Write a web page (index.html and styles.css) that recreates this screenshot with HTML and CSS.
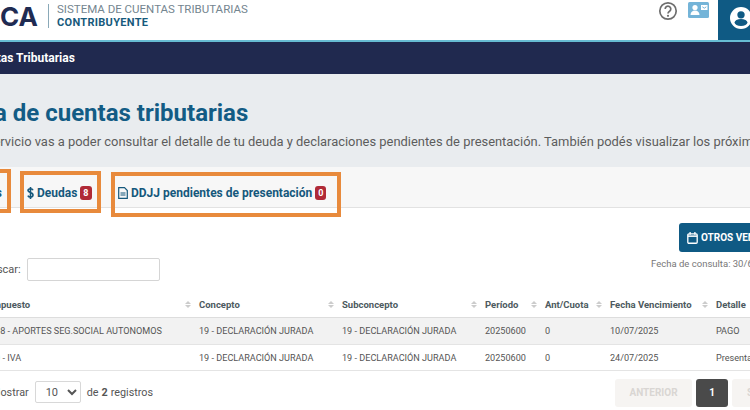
FILE: index.html
```html
<!DOCTYPE html>
<html lang="es">
<head>
<meta charset="utf-8">
<title>Sistema de Cuentas Tributarias</title>
<link rel="stylesheet" href="styles.css">
</head>
<body>
<div class="page">
  <header class="top">
    <span class="logo">ARCA</span>
    <span class="divider"></span>
    <div class="system">
      <div class="system-name">SISTEMA DE CUENTAS TRIBUTARIAS</div>
      <div class="system-role">CONTRIBUYENTE</div>
    </div>
    <div class="top-icons">
      <svg class="ico-help" width="20" height="20" viewBox="0 0 20 20"><circle cx="10" cy="10" r="8.2" fill="none" stroke="#6e6e6e" stroke-width="1.7"/><path d="M7.2 7.9a2.8 2.8 0 1 1 4.4 2.3c-1 .7-1.6 1.1-1.6 2.3" fill="none" stroke="#6e6e6e" stroke-width="1.7"/><circle cx="10" cy="14.8" r="1.1" fill="#6e6e6e"/></svg>
      <svg class="ico-card" width="21" height="16" viewBox="0 0 21 16"><rect width="21" height="16" rx="1.5" fill="#74b4d8"/><circle cx="7" cy="5.500" r="2.600" fill="#fff"/><path d="M2.500 13c0-3 2-4.500 4.500-4.500s4.500 1.500 4.500 4.500z" fill="#fff"/><rect x="13" y="3" width="6.500" height="5" fill="#fff"/><path d="M14.300 4.800l2 1.400 2-1.400" fill="none" stroke="#74b4d8" stroke-width="1"/></svg>
    </div>
    <div class="user-tile">
      <svg width="22" height="22" viewBox="0 0 24 24"><circle cx="12" cy="12" r="12" fill="#fff"/><circle cx="12" cy="8.500" r="4" fill="#0f5a84"/><ellipse cx="12" cy="17" rx="7" ry="3.800" fill="#0f5a84"/></svg>
    </div>
  </header>
  <nav class="nav">Cuentas Tributarias</nav>
  <section class="hero">
    <h1 class="title">Consulta de cuentas tributarias</h1>
    <p class="lead">Con este servicio vas a poder consultar el detalle de tu deuda y declaraciones pendientes de presentación. También podés visualizar los próximos vencimientos.</p>
  </section>
  <div class="tabs">
    <a class="tab tab-first">Vencimientos</a>
    <a class="tab tab-debt"><svg class="tab-ico" width="7" height="12" viewBox="0 0 7 12"><path d="M6 3.200C5.600 2.200 4.700 1.800 3.500 1.800 2 1.800 1 2.500 1 3.600c0 2.600 5 1.300 5 4.500 0 1.200-1.100 2-2.500 2-1.300 0-2.200-.5-2.600-1.500M3.500 0v12" fill="none" stroke="#15587c" stroke-width="1.600"/></svg>Deudas<span class="badge">8</span></a>
    <a class="tab tab-ddjj"><svg class="tab-ico" width="10" height="12" viewBox="0 0 10 12"><path d="M.7.700h5.800l2.800 2.800v7.800H.7z" fill="none" stroke="#15587c" stroke-width="1.200"/><path d="M2.500 6h5M2.500 8h5" stroke="#15587c" stroke-width="1.200"/></svg>DDJJ pendientes de presentación<span class="badge">0</span></a>
    <span class="mark mark-a"></span>
    <span class="mark mark-b"></span>
    <span class="mark mark-c"></span>
  </div>
  <main class="content">
    <div class="actions">
      <button class="btn-other"><svg width="11" height="12" viewBox="0 0 10 11"><rect x=".7" y="1.700" width="8.600" height="8.600" rx="1" fill="none" stroke="#fff" stroke-width="1.200"/><path d="M.7 3.800h8.600" stroke="#fff" stroke-width="1.400"/><path d="M2.800 0v2.500M7.200 0v2.500" stroke="#fff" stroke-width="1.200"/></svg>OTROS VENCIMIENTOS</button>
    </div>
    <div class="filters">
      <label class="search">Buscar:<input class="search-input" type="text"></label>
      <span class="consult">Fecha de consulta: 30/6/2025 12:00:00</span>
    </div>
    <table class="grid">
      <colgroup>
        <col class="c1"><col class="c2"><col class="c3"><col class="c4"><col class="c5"><col class="c6"><col class="c7">
      </colgroup>
      <thead>
        <tr>
          <th><div class="th-in">Impuesto<span class="sort"></span></div></th>
          <th><div class="th-in">Concepto<span class="sort"></span></div></th>
          <th><div class="th-in">Subconcepto<span class="sort"></span></div></th>
          <th><div class="th-in">Período<span class="sort"></span></div></th>
          <th><div class="th-in">Ant/Cuota<span class="sort"></span></div></th>
          <th><div class="th-in">Fecha Vencimiento<span class="sort"></span></div></th>
          <th><div class="th-in">Detalle<span class="sort"></span></div></th>
        </tr>
      </thead>
      <tbody>
        <tr class="odd">
          <td>308 - APORTES SEG.SOCIAL AUTONOMOS</td>
          <td>19 - DECLARACIÓN JURADA</td>
          <td>19 - DECLARACIÓN JURADA</td>
          <td>20250600</td>
          <td>0</td>
          <td>10/07/2025</td>
          <td>PAGO</td>
        </tr>
        <tr>
          <td>30 - IVA</td>
          <td>19 - DECLARACIÓN JURADA</td>
          <td>19 - DECLARACIÓN JURADA</td>
          <td>20250600</td>
          <td>0</td>
          <td>24/07/2025</td>
          <td>Presentación</td>
        </tr>
      </tbody>
    </table>
    <div class="pager">
      <div class="pager-info">Mostrar
        <select class="pager-size"><option>10</option></select>
        de <b>2</b> registros
      </div>
      <div class="pager-btns">
        <span class="pg pg-off pg-prev">ANTERIOR</span>
        <span class="pg pg-on">1</span>
        <span class="pg pg-off pg-next">SIGUIENTE</span>
      </div>
    </div>
  </main>
</div>
</body>
</html>
```
FILE: styles.css
```css
html, body { margin: 0; padding: 0; height: 100%; overflow: hidden; background: #fff; }
body { font-family: Roboto, "Liberation Sans", sans-serif; }
.page { width: 930px; margin-left: -100px; }

.top { height: 40px; display: flex; align-items: flex-start; border-bottom: 2px solid #67bcd3; background: #fff; box-sizing: content-box; }
.logo { margin-left: 50px; margin-top: 1px; width: 88px; text-align: right; font: 700 26px/32px Inter, "Liberation Sans", sans-serif; color: #1f2b52; }
.divider { width: 1px; height: 24px; margin: 4px 8px 0 10px; background: #8aa9b8; }
.system { padding-top: 3px; }
.system-name { font-size: 11.500px; line-height: 13px; color: #74858f; white-space: nowrap; }
.system-role { font-size: 11px; line-height: 13px; font-weight: 700; color: #175a7c; letter-spacing: .3px; }
.top-icons { margin-left: auto; margin-top: 1px; display: flex; align-items: flex-start; gap: 10px; }
.ico-card { margin-top: 1px; }
.user-tile { width: 112px; height: 40px; margin-left: 9px; background: #0f5a84; box-sizing: border-box; padding: 7px 0 0 12px; }

.nav { height: 32px; background: #20294f; color: #fff; font-size: 12px; font-weight: 700; line-height: 32px; padding-left: 69px; box-sizing: border-box; }

.hero { height: 93px; background: #e9ecef; box-sizing: border-box; padding: 24px 0 0 11px; }
.title { margin: 0; font-size: 24px; line-height: 30px; font-weight: 700; color: #135c85; white-space: nowrap; }
.lead { margin: 5px 0 0 22px; font-size: 12.920px; line-height: 18px; color: #5c5c5c; white-space: nowrap; }

.tabs { position: relative; height: 41px; background: #f7f7f7; border-bottom: 1px solid #e2e2e2; box-sizing: border-box; display: flex; align-items: flex-start; padding: 18px 0 0 28px; font-size: 12px; font-weight: 700; color: #15587c; line-height: 14px; }
.tab { display: flex; align-items: center; white-space: nowrap; height: 15px; }
.tab-first { width: 99px; }
.tab-debt { width: 91px; }
.tab-ico { margin-right: 3px; }
.badge { margin-left: 3px; background: #b02a37; color: #fff; font-size: 9px; line-height: 10px; padding: 2px 3px; border-radius: 3px; }

.mark { position: absolute; box-sizing: border-box; border: 4px solid #e88a3c; }
.mark-a { left: 30px; top: 2px; width: 81px; height: 44px; }
.mark-b { left: 120px; top: 4px; width: 81px; height: 42px; }
.mark-c { left: 211px; top: 5px; width: 230px; height: 45px; }

.content { padding: 15px 7px 0 82px; }
.actions { display: flex; justify-content: flex-end; height: 29px; }
.btn-other { width: 144px; height: 29px; padding: 0 0 0 8px; border: 0; border-radius: 3px; background: #0f5a84; color: #fff; font: 700 10px Roboto, sans-serif; display: flex; align-items: center; justify-content: flex-start; gap: 3px; white-space: nowrap; }
.filters { display: flex; justify-content: space-between; align-items: flex-start; height: 36px; margin-top: 6px; }
.search { display: flex; align-items: center; gap: 6px; margin-left: 2px; font-size: 11px; color: #555; }
.search-input { width: 133px; height: 23px; box-sizing: border-box; border: 1px solid #d5d5d5; border-radius: 2px; padding: 0; margin: 0; }
.consult { margin-right: 6px; font-size: 9.500px; line-height: 11px; color: #777; white-space: nowrap; }

.grid { width: 809px; table-layout: fixed; border-collapse: collapse; font-size: 9.100px; color: #555; }
.c1 { width: 209px; } .c2, .c3 { width: 143px; } .c4 { width: 60px; } .c5 { width: 65px; } .c6 { width: 106px; } .c7 { width: 83px; }
.grid th { height: 21px; padding: 0 0 2px 8px; text-align: left; font-size: 9.500px; font-weight: 700; color: #4d5a60; border-bottom: 1px solid #ddd; white-space: nowrap; }
.th-in { display: flex; align-items: center; justify-content: space-between; }
.sort { display: flex; flex-direction: column; gap: 1px; width: 6px; }
.sort::before, .sort::after { content: ""; width: 0; height: 0; border-left: 3px solid transparent; border-right: 3px solid transparent; }
.sort::before { border-bottom: 3.500px solid #ccc; }
.sort::after { border-top: 3.500px solid #ccc; }
.grid td { height: 26px; padding: 0 0 0 8px; border-bottom: 1px solid #e4e4e4; white-space: nowrap; box-sizing: border-box; }
.odd td { background: #f2f2f2; height: 27px; }

.pager { display: flex; margin-top: 8px; }
.pager-info { flex: 0 0 633px; box-sizing: border-box; margin-top: 2px; padding-left: 9px; font-size: 10.800px; color: #555; display: flex; align-items: center; gap: 6px; height: 22px; white-space: nowrap; }
.pager-info b { margin: 0 -3px; }
.pager-size { width: 46px; height: 22px; font: 11px Roboto, sans-serif; color: #555; background: #fff; border: 1px solid #d8d8d8; border-radius: 2px; padding-left: 6px; }
.pager-btns { display: flex; gap: 4px; flex: none; }
.pg { height: 28px; line-height: 28px; box-sizing: border-box; text-align: center; font-size: 10px; font-weight: 700; border-radius: 3px; }
.pg-off { background: #f6f4f2; color: #d9d6d3; }
.pg-prev { width: 77px; }
.pg-next { width: 80px; }
.pg-on { width: 32px; background: #4a4a4a; color: #fff; }
```
